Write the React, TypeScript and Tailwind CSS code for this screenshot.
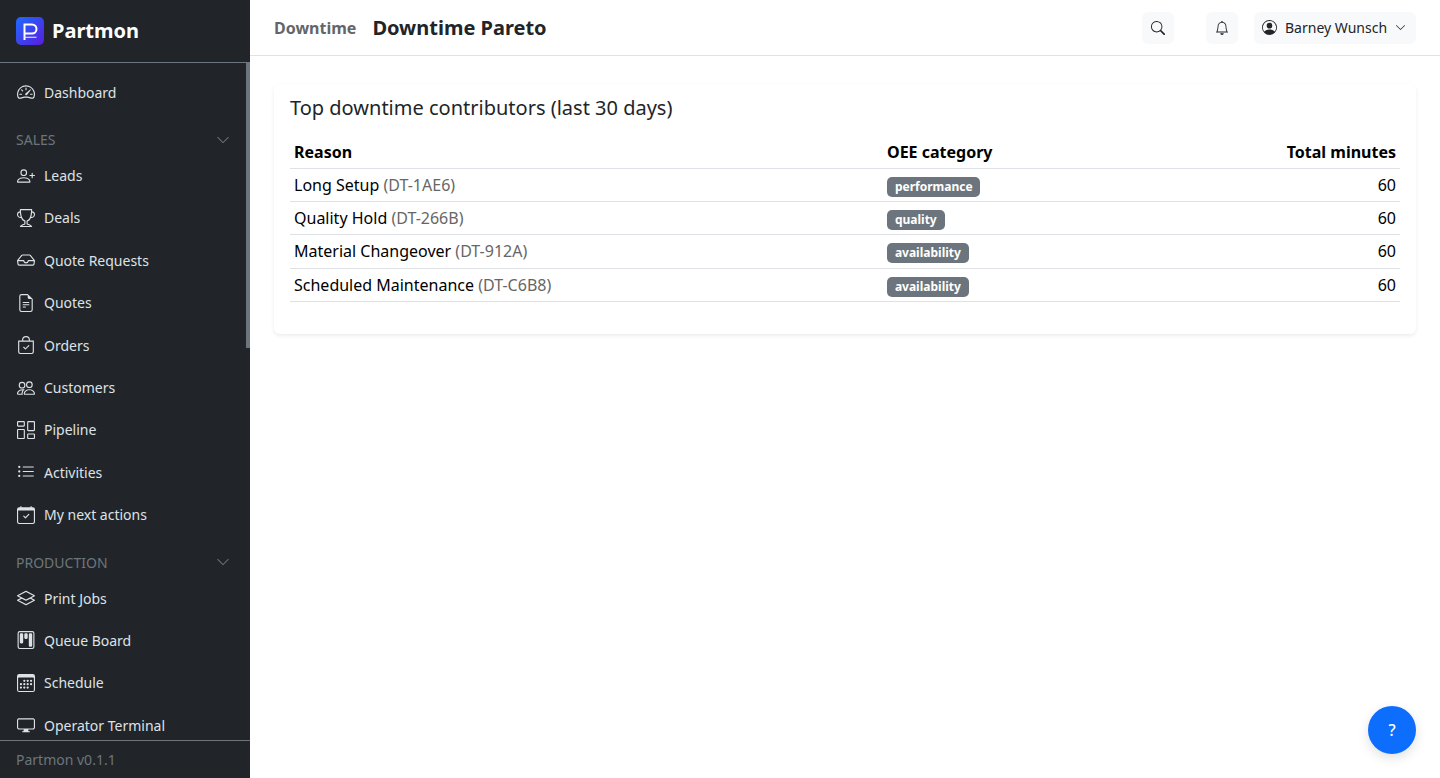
import {
  BsSpeedometer2,
  BsPersonPlus,
  BsTrophy,
  BsInbox,
  BsFileEarmarkText,
  BsBagCheck,
  BsPeople,
  BsColumnsGap,
  BsListUl,
  BsCalendarCheck,
  BsLayers,
  BsKanban,
  BsCalendar3,
  BsDisplay,
  BsSearch,
  BsBell,
  BsPersonCircle,
  BsChevronDown,
} from "react-icons/bs";

const salesItems = [
  { name: "Leads", icon: BsPersonPlus },
  { name: "Deals", icon: BsTrophy },
  { name: "Quote Requests", icon: BsInbox },
  { name: "Quotes", icon: BsFileEarmarkText },
  { name: "Orders", icon: BsBagCheck },
  { name: "Customers", icon: BsPeople },
  { name: "Pipeline", icon: BsColumnsGap },
  { name: "Activities", icon: BsListUl },
  { name: "My next actions", icon: BsCalendarCheck },
];

const productionItems = [
  { name: "Print Jobs", icon: BsLayers },
  { name: "Queue Board", icon: BsKanban },
  { name: "Schedule", icon: BsCalendar3 },
  { name: "Operator Terminal", icon: BsDisplay },
];

const rows = [
  { reason: "Long Setup", code: "DT-1AE6", category: "performance", rowClass: "h-[33px]", badgeClass: "translate-y-[1px]" },
  { reason: "Quality Hold", code: "DT-266B", category: "quality", rowClass: "h-[33px]", badgeClass: "translate-y-[1px]" },
  { reason: "Material Changeover", code: "DT-912A", category: "availability", rowClass: "h-[34px]", badgeClass: "translate-y-0" },
  { reason: "Scheduled Maintenance", code: "DT-C6B8", category: "availability", rowClass: "h-[33px]", badgeClass: "translate-y-[1px]" },
];

function NavItem({ name, icon: Icon }: { name: string; icon: typeof BsBell }) {
  return (
    <a href="#" className="flex h-[42.4px] shrink-0 items-center gap-[9px] pl-[17px] text-[14px] text-[#dee2e6]">
      <Icon className="h-[18px] w-[18px] shrink-0" />
      <span>{name}</span>
    </a>
  );
}

function SectionLabel({ name }: { name: string }) {
  return (
    <div className="flex h-[21px] shrink-0 items-center justify-between pl-4 pr-5 text-[14px] text-[#6c757d]">
      <span>{name}</span>
      <BsChevronDown className="h-[14px] w-[14px]" />
    </div>
  );
}

function Sidebar() {
  return (
    <aside className="flex h-full w-[250px] shrink-0 flex-col bg-[#212529]">
      <div className="flex h-[63px] shrink-0 items-center gap-2 border-b border-[#6c757d] pl-4">
        <svg viewBox="0 0 28 28" className="h-7 w-7 shrink-0">
          <defs>
            <linearGradient id="logo-bg" x1="0" y1="0" x2="1" y2="1">
              <stop offset="0" stopColor="#1e6bff" />
              <stop offset="1" stopColor="#5a1be0" />
            </linearGradient>
          </defs>
          <rect width="28" height="28" rx="5" fill="url(#logo-bg)" />
          <path d="M8.5 23V7.5H16a4.5 4.5 0 0 1 0 9H8.5" fill="none" stroke="#fff" strokeWidth="2" />
          <path d="M8.5 20.3h12" stroke="#d9d4ff" strokeWidth="1.2" />
        </svg>
        <span className="text-[20px] font-bold text-white">Partmon</span>
      </div>
      <div className="relative min-h-0 flex-1 overflow-hidden">
        <div className="absolute right-0 top-0 h-[285px] w-1 bg-[#6c757d]" />
        <nav className="flex flex-col pt-2">
          <NavItem name="Dashboard" icon={BsSpeedometer2} />
          <div className="mt-[16px] mb-[4px]">
            <SectionLabel name="SALES" />
          </div>
          {salesItems.map((item) => (
            <NavItem key={item.name} {...item} />
          ))}
          <div className="mt-[16px] mb-[4px]">
            <SectionLabel name="PRODUCTION" />
          </div>
          {productionItems.map((item) => (
            <NavItem key={item.name} {...item} />
          ))}
        </nav>
      </div>
      <div className="flex h-[38px] shrink-0 items-center border-t border-[#6c757d] pl-4 text-[14px] text-[#6c757d]">
        Partmon v0.1.1
      </div>
    </aside>
  );
}

function Topbar() {
  return (
    <header className="flex h-[56px] shrink-0 items-center justify-between border-b border-[#dee2e6] pl-6 pr-6">
      <div className="flex items-center gap-4">
        <span className="text-[16px] font-bold text-[#62666a]">Downtime</span>
        <span className="text-[20px] font-bold text-[#212529]">Downtime Pareto</span>
      </div>
      <div className="flex items-center">
        <button className="flex h-8 w-8 items-center justify-center rounded-md bg-[#f8f9fa] text-[#212529]">
          <BsSearch className="h-[14px] w-[14px]" />
        </button>
        <button className="ml-[32px] flex h-8 w-8 items-center justify-center rounded-md bg-[#f8f9fa] text-[#212529]">
          <BsBell className="h-[14px] w-[14px]" />
        </button>
        <button className="ml-4 flex h-8 w-[162px] items-center rounded-md bg-[#f8f9fa] pl-2 text-[14px] text-[#212529]">
          <BsPersonCircle className="h-[15px] w-[15px]" />
          <span className="ml-2">Barney Wunsch</span>
          <BsChevronDown className="ml-2 h-[11px] w-[11px]" />
        </button>
      </div>
    </header>
  );
}

export default function App() {
  return (
    <div className="relative flex h-[778px] overflow-hidden bg-white font-['Noto_Sans',sans-serif] text-[#212529]">
      <Sidebar />
      <main className="flex min-w-0 flex-1 flex-col">
        <Topbar />
        <div className="px-6 pt-7">
          <section className="h-[250px] rounded-md bg-white px-4 pt-[9px] shadow-[0_2px_4px_rgba(0,0,0,0.075)]">
            <h2 className="mb-[15px] text-[20px] leading-[30px] text-[#212529]">Top downtime contributors (last 30 days)</h2>
            <table className="w-full border-collapse text-[16px] text-black">
              <thead>
                <tr className="h-[30px] border-b border-[#dee2e6]">
                  <th className="w-[593px] px-1 pb-[2px] text-left font-bold">Reason</th>
                  <th className="px-1 pb-[2px] text-left font-bold">OEE category</th>
                  <th className="px-1 pb-[2px] text-right font-bold">Total minutes</th>
                </tr>
              </thead>
              <tbody>
                {rows.map((row) => (
                  <tr key={row.code} className={`${row.rowClass} border-b border-[#dee2e6]`}>
                    <td className="px-1">
                      {row.reason} <span className="text-[#666]">({row.code})</span>
                    </td>
                    <td className="px-1">
                      <span className={`inline-block ${row.badgeClass} rounded-[5px] bg-[#6c757d] px-[7.9px] py-[3px] align-middle text-[12px] leading-[14px] font-bold text-white`}>
                        {row.category}
                      </span>
                    </td>
                    <td className="px-1 text-right">60</td>
                  </tr>
                ))}
              </tbody>
            </table>
          </section>
        </div>
      </main>
      <button className="absolute bottom-6 right-6 flex h-12 w-12 items-center justify-center rounded-full bg-[#0d6efd] text-[16px] font-medium text-white shadow-[0_4px_12px_rgba(0,0,0,0.12)]">
        ?
      </button>
    </div>
  );
}
